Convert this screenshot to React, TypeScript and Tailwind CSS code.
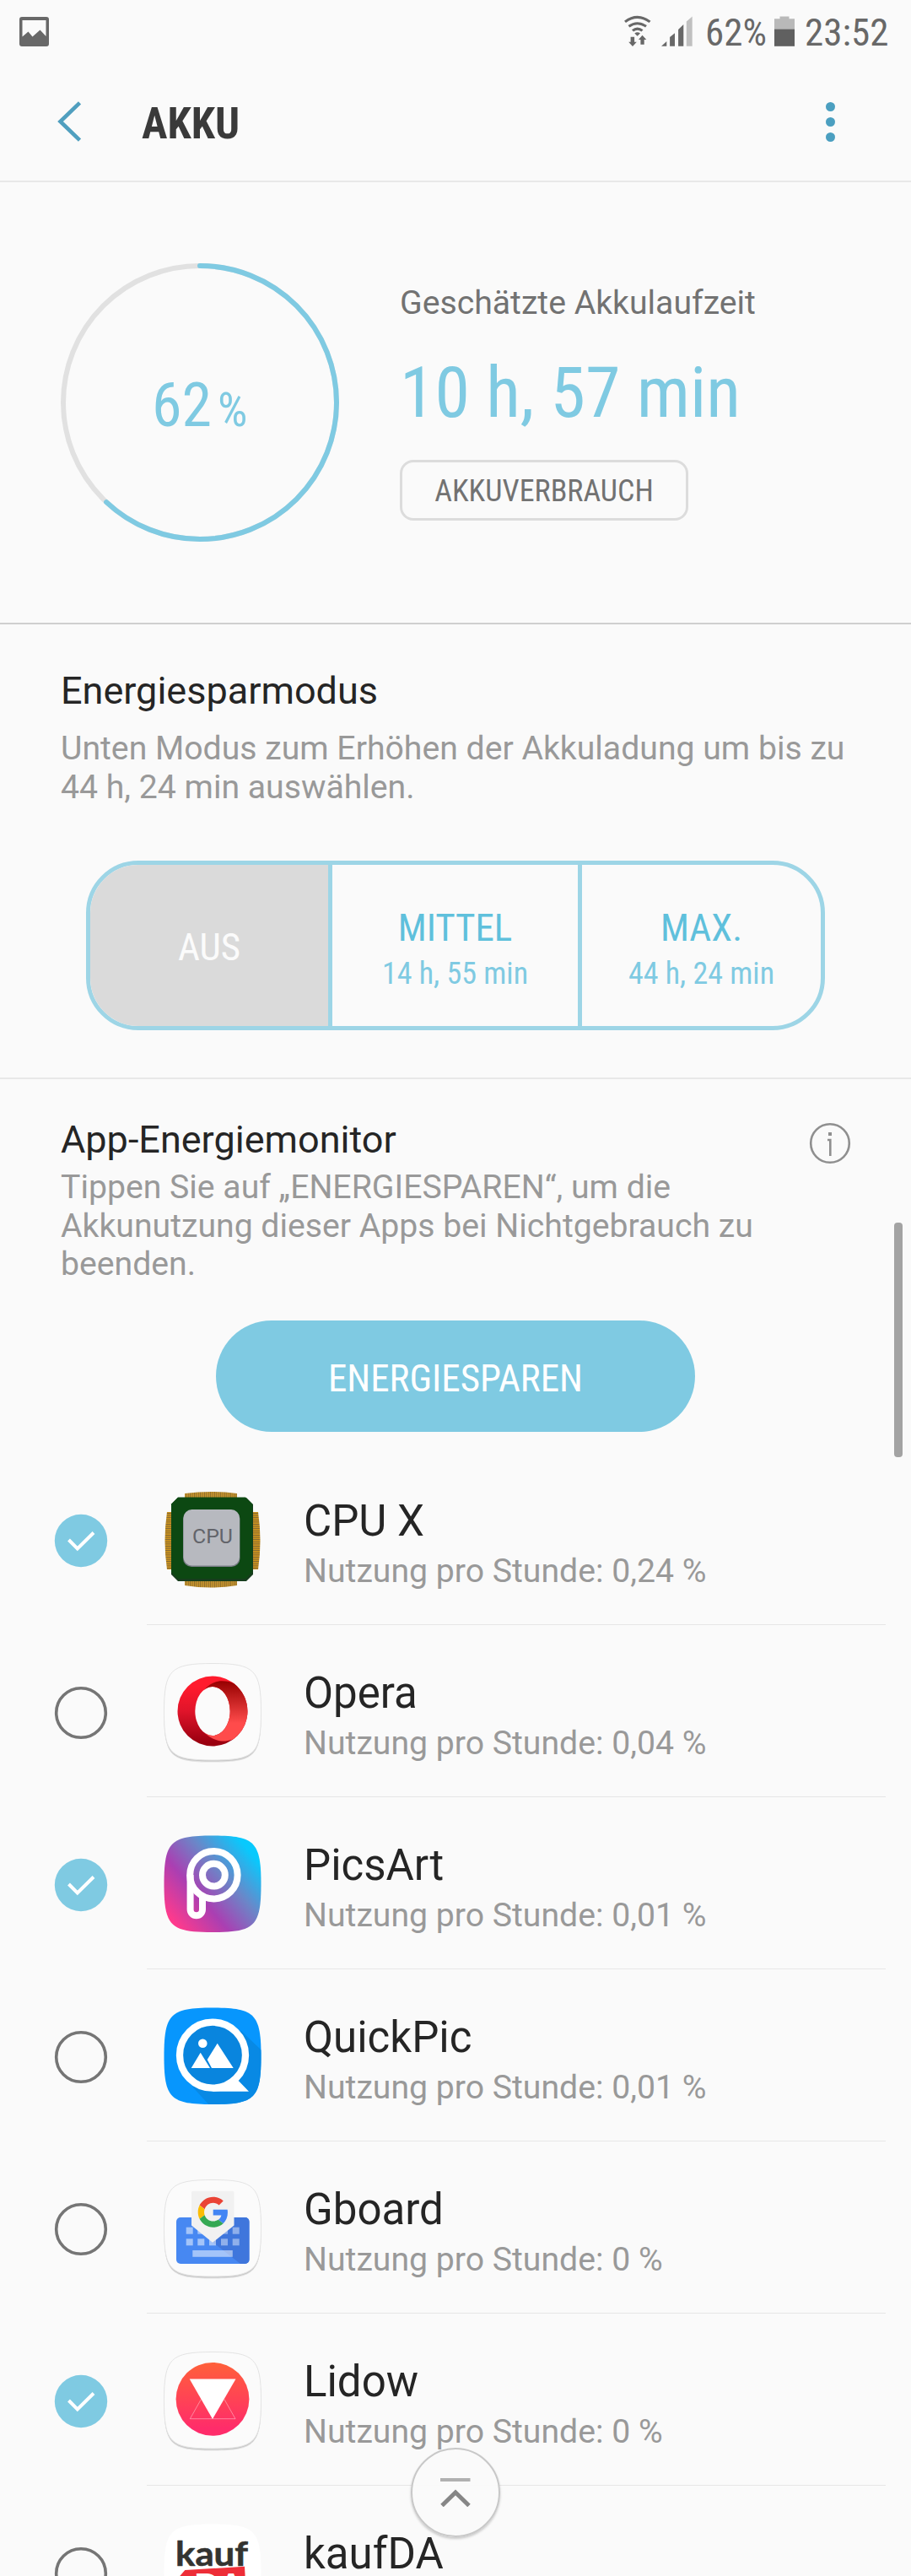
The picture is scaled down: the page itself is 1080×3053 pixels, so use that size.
import type { ReactNode } from "react";

const SQUIRCLE =
  "M58 .5C108 .5 115.5 8 115.5 58C115.5 108 108 115 58 115C8 115 .5 108 .5 58C.5 8 8 .5 58 .5Z";

function Cond({ children, className = "" }: { children: ReactNode; className?: string }) {
  return (
    <span className={"block whitespace-nowrap font-['Roboto_Condensed',Roboto,sans-serif] [font-stretch:75%] " + className}>
      {children}
    </span>
  );
}

function IconFrame({ children }: { children: ReactNode }) {
  return (
    <svg viewBox="0 0 116 120" className="block h-[120px] w-[116px] shrink-0">
      {children}
    </svg>
  );
}

function LightTile() {
  return (
    <>
      <path d={SQUIRCLE} fill="#e2e2e2" transform="translate(0 2.6)" />
      <path d={SQUIRCLE} fill="#c6c6c6" transform="translate(0 1.5)" />
      <path d={SQUIRCLE} fill="#fbfbfb" stroke="#e4e4e4" strokeWidth="1" />
    </>
  );
}

function CpuIcon() {
  return (
    <IconFrame>
      <defs>
        <pattern id="pinV" width="2.4" height="10" patternUnits="userSpaceOnUse">
          <rect width="2.4" height="10" fill="#c8962e" />
          <rect width=".9" height="10" fill="#8a6a2c" />
        </pattern>
        <pattern id="pinH" width="10" height="2.6" patternUnits="userSpaceOnUse">
          <rect width="10" height="2.6" fill="#d0951c" />
          <rect width="10" height="1" fill="#806534" />
        </pattern>
      </defs>
      <path d="M25 10V3Q56-1 87 3V10Z" fill="url(#pinV)" />
      <path d="M25 103V112Q56 117 87 112V103Z" fill="url(#pinV)" />
      <path d="M10 25H4Q-1 59 4 93H10Z" fill="url(#pinH)" />
      <path d="M104 25H112Q117 59 112 93H104Z" fill="url(#pinH)" />
      <path d="M17 8H98L106 16V99L98 107H17L9 99V16Z" fill="#163d1d" />
      <path d="M17 7.500H97L105 15.500V96L97 104H17L9 96V15.500Z" fill="#0c4812" />
      <rect x="23" y="23" width="67.5" height="67" rx="10" fill="#777c84" />
      <rect x="23.5" y="22" width="66.5" height="66.5" rx="10" fill="#b7b9bf" />
      <text x="34" y="62" fontSize="24" fill="#62646a" fontFamily="Roboto, sans-serif" textLength="48" lengthAdjust="spacingAndGlyphs">
        CPU
      </text>
    </IconFrame>
  );
}

function OperaIcon() {
  return (
    <IconFrame>
      <defs>
        <linearGradient id="opL" x1="0" y1="0" x2="0" y2="1">
          <stop offset=".15" stopColor="#ff1b2d" />
          <stop offset=".5" stopColor="#e0142a" />
          <stop offset=".95" stopColor="#9a0010" />
        </linearGradient>
        <linearGradient id="opR" x1="0" y1="0" x2="0" y2="1">
          <stop offset="0" stopColor="#960000" />
          <stop offset=".7" stopColor="#ff4b4b" />
        </linearGradient>
      </defs>
      <LightTile />
      <path
        fillRule="evenodd"
        fill="url(#opL)"
        d="M58 15.5A41.5 41.5 0 0 1 58 98.500A41.5 41.5 0 0 1 58 15.500ZM58 28A20.700 29 0 0 0 58 86A20.700 29 0 0 0 58 28Z"
      />
      <path
        fill="url(#opR)"
        d="M48 32C54 25 61 21.300 69 21.300C75 21.300 80 22.600 83.500 24.300A41.500 41.500 0 0 1 83.500 89.700C80 91.600 75 92.500 69 92.500C61 92 54 88 48 82C52 85.200 55 86 58 86A20.700 29 0 0 0 58 28C55 28 52 28.800 48 32Z"
      />
    </IconFrame>
  );
}

function PicsArtIcon() {
  return (
    <IconFrame>
      <defs>
        <linearGradient id="pa" x1=".08" y1=".88" x2=".9" y2=".18">
          <stop offset="0" stopColor="#ff3a8c" />
          <stop offset=".35" stopColor="#aa3fb2" />
          <stop offset=".66" stopColor="#6b86c8" />
          <stop offset="1" stopColor="#08c9fd" />
        </linearGradient>
      </defs>
      <path d={SQUIRCLE} fill="url(#pa)" />
      <g fill="none" stroke="#fff" strokeWidth="8">
        <circle cx="59.400" cy="47.200" r="28.200" />
        <circle cx="59.400" cy="47.200" r="13.400" />
        <path d="M31.600 47V88a7.200 7.200 0 0 0 14.400 0V71" />
      </g>
    </IconFrame>
  );
}

function QuickPicIcon() {
  return (
    <IconFrame>
      <defs>
        <clipPath id="qpc">
          <path d={SQUIRCLE} />
        </clipPath>
      </defs>
      <path d={SQUIRCLE} fill="#0796fd" />
      <path d="M92 28L118 53V118H56L34 94Z" fill="#0889e4" clipPath="url(#qpc)" />
      <path d="M80 90L88.700 87L101 99.700H58V92Z" fill="#fff" />
      <circle cx="58" cy="56.700" r="39" fill="#0985de" stroke="#fff" strokeWidth="8.300" />
      <circle cx="46.300" cy="42.700" r="5.300" fill="#fff" />
      <path d="M43.700 53.700L55 72H32.700ZM63.700 42.700L82.700 72H57L51.700 62Z" fill="#fff" />
    </IconFrame>
  );
}

const KEY_X = [26.7, 40.3, 54, 68, 81.7];

function GboardIcon() {
  return (
    <IconFrame>
      <LightTile />
      <rect x="15" y="45" width="86.500" height="55" rx="5" fill="#4788f2" />
      <path d="M83.300 45H96.500a5 5 0 0 1 5 5V95a5 5 0 0 1-5 5H91L58 74.300L83.300 54Z" fill="#3f76dc" />
      {KEY_X.map((x) => (
        <g key={x} fill="#fff" fillOpacity={x > 60 ? 0.42 : 0.5}>
          <rect x={x} y="56.700" width="8" height="8" />
          <rect x={x} y="70.300" width="8" height="8" />
        </g>
      ))}
      <rect x="34.300" y="84" width="47.500" height="7.800" fill="#fff" fillOpacity=".5" />
      <path d="M35 13.700H81.500a2 2 0 0 1 2 2V54.500L58 74.800L33 54.500V15.700a2 2 0 0 1 2-2Z" fill="#f1f1f1" />
      <g transform="translate(40.700 20.700) scale(.75)">
        <path fill="#EA4335" d="M24 9.500c3.540 0 6.710 1.220 9.210 3.600l6.850-6.850C35.900 2.380 30.470 0 24 0 14.620 0 6.510 5.380 2.560 13.220l7.980 6.190C12.430 13.720 17.740 9.500 24 9.500z" />
        <path fill="#4285F4" d="M46.980 24.550c0-1.570-.15-3.090-.38-4.550H24v9.020h12.940c-.58 2.960-2.260 5.480-4.780 7.180l7.730 6c4.510-4.180 7.090-10.360 7.090-17.650z" />
        <path fill="#FBBC05" d="M10.530 28.590c-.48-1.450-.76-2.990-.76-4.590s.27-3.140.76-4.590l-7.980-6.190C.92 16.460 0 20.120 0 24c0 3.880.92 7.540 2.560 10.780l7.970-6.190z" />
        <path fill="#34A853" d="M24 48c6.480 0 11.930-2.130 15.890-5.810l-7.730-6c-2.150 1.450-4.920 2.300-8.160 2.300-6.260 0-11.570-4.220-13.470-9.910l-7.980 6.190C6.510 42.620 14.620 48 24 48z" />
      </g>
    </IconFrame>
  );
}

function LidowIcon() {
  return (
    <IconFrame>
      <defs>
        <linearGradient id="li" x1="0" y1="0" x2="0" y2="1">
          <stop offset="0" stopColor="#ff603a" />
          <stop offset=".9" stopColor="#ff2c6a" />
        </linearGradient>
      </defs>
      <LightTile />
      <circle cx="58" cy="56.300" r="43.400" fill="url(#li)" />
      <path d="M44.300 56.700L31.300 79.700H85L72 56.700" fill="none" stroke="#fff" strokeOpacity=".5" strokeWidth=".8" />
      <path d="M30.700 32.500H85.500L58 80Z" fill="#fff" />
    </IconFrame>
  );
}

function KaufIcon() {
  return (
    <IconFrame>
      <path d={SQUIRCLE} fill="#fff" />
      <text x="14" y="49.500" fontSize="40" fontWeight="700" fill="#333330" stroke="#333330" strokeWidth=".6" strokeLinejoin="round" fontFamily="Lato, sans-serif" textLength="86" lengthAdjust="spacingAndGlyphs">
        kauf
      </text>
      <path d="M25.300 55L96 50.700L98 90H8V75Z" fill="#ee2e38" />
      <text x="36" y="87" fontSize="38" fontWeight="900" fill="#fff" fontFamily="Lato, sans-serif" textLength="58" lengthAdjust="spacingAndGlyphs">
        DA
      </text>
    </IconFrame>
  );
}

function Check({ on }: { on: boolean }) {
  return (
    <svg viewBox="0 0 64 64" className="block h-16 w-16 shrink-0">
      {on ? (
        <>
          <circle cx="32" cy="32" r="31.200" fill="#7fcae2" />
          <path d="M17.500 31L27.800 41.500L47 22.500" fill="none" stroke="#fff" strokeWidth="4" />
        </>
      ) : (
        <circle cx="32" cy="32" r="29.300" fill="none" stroke="#757575" strokeWidth="3.600" />
      )}
    </svg>
  );
}

const APPS = [
  { name: "CPU X", usage: "0,24 %", on: true, icon: <CpuIcon /> },
  { name: "Opera", usage: "0,04 %", on: false, icon: <OperaIcon /> },
  { name: "PicsArt", usage: "0,01 %", on: true, icon: <PicsArtIcon /> },
  { name: "QuickPic", usage: "0,01 %", on: false, icon: <QuickPicIcon /> },
  { name: "Gboard", usage: "0 %", on: false, icon: <GboardIcon /> },
  { name: "Lidow", usage: "0 %", on: true, icon: <LidowIcon /> },
  { name: "kaufDA", usage: "0 %", on: false, icon: <KaufIcon /> },
];

function AppRow({ app }: { app: (typeof APPS)[number] }) {
  return (
    <li className="flex h-[204px] pl-16">
      <div className="pt-[72px]">
        <Check on={app.on} />
      </div>
      <div className="ml-[46px] mr-[30px] flex grow border-b border-[#e6e6e6] pl-5">
        <div className="pt-[45px]">{app.icon}</div>
        <div className="ml-[50px] pt-[51px]">
          <div className="text-[51px] leading-[60px] text-[#252525]">{app.name}</div>
          <div className="mt-[4px] text-[39.200px] leading-[50px] text-[#999]">Nutzung pro Stunde: {app.usage}</div>
        </div>
      </div>
    </li>
  );
}

function StatusBar() {
  return (
    <div className="flex h-[74px] items-center pl-[23px] pr-[25px] text-[#686868]">
      <svg viewBox="0 0 35 35" className="h-[35px] w-[35px]">
        <path fillRule="evenodd" fill="currentColor" d="M3 0H32a3 3 0 0 1 3 3V32a3 3 0 0 1-3 3H3a3 3 0 0 1-3-3V3a3 3 0 0 1 3-3ZM3.500 4V23.500L10.500 17.500L15.500 23.500L24.500 15.500L31.500 23V4Z" />
      </svg>
      <svg viewBox="0 0 32 40" preserveAspectRatio="none" className="ml-auto h-[38px] w-8">
        <g fill="none" stroke="currentColor" strokeWidth="3.200">
          <path d="M1 8.300Q15.600-3.200 30.500 8.300" />
          <path d="M5.500 14Q15.600 6.500 26 14" />
          <path d="M10 19.300Q15.600 14.500 21.500 19.300" />
        </g>
        <path fill="currentColor" d="M12.300 22.500Q15.600 20 19 22.500L15.600 26ZM7.600 27h4.500v6.500h2.700L10 39L5.200 33.500h2.400ZM19.400 36.500V30.500H17L21.500 25L26.300 30.500H23.700V36.500Z" />
      </svg>
      <svg viewBox="0 0 37 38" preserveAspectRatio="none" className="ml-3 h-[36px] w-[37px]">
        <path fill="currentColor" d="M0 37.800H6.300V31.600ZM10.100 37.800V26.500L16 21.300V37.800ZM20.100 37.800V16.800L26.300 10.600V37.800Z" />
        <path fill="#c0c0c0" d="M29.800 37.800V6.800L36.700.6V37.800Z" />
      </svg>
      <Cond className="ml-[15px] mt-[3px] w-[74px] text-[45px] leading-none">62%</Cond>
      <svg viewBox="0 0 24 38" preserveAspectRatio="none" className="ml-[8px] h-[36px] w-6">
        <path fill="#b9b9b9" d="M0 17V3.500H6.500V.500H17.500V3.500H24V17Z" />
        <path fill="#606060" d="M0 16.500H24V37.800H0Z" />
      </svg>
      <Cond className="ml-3 mt-[3px] w-[101px] text-[45px] leading-none">23:52</Cond>
    </div>
  );
}

function Header() {
  return (
    <header className="flex h-[142px] items-center border-b-2 border-[#e8e8e8] pl-[67px] pr-[90px]">
      <svg viewBox="0 0 30 48" className="h-[48px] w-[30px]">
        <path d="M27.500 1.800L4.500 24L27.500 46.200" fill="none" stroke="#509fbf" strokeWidth="4.600" />
      </svg>
      <Cond className="ml-[71px] mt-1 text-[51px] font-bold leading-none text-[#3a3a3a]">AKKU</Cond>
      <div className="ml-auto flex flex-col gap-[7px]">
        <i className="block h-[11px] w-[11px] rounded-full bg-[#4b9fc0]" />
        <i className="block h-[11px] w-[11px] rounded-full bg-[#4b9fc0]" />
        <i className="block h-[11px] w-[11px] rounded-full bg-[#4b9fc0]" />
      </div>
    </header>
  );
}

function Summary() {
  return (
    <section className="flex h-[524px] border-b-2 border-[#cfcfcf] pl-[72px] pt-[96px]">
      <div className="relative h-[330px] w-[330px] shrink-0">
        <svg viewBox="0 0 330 330" className="h-full w-full" fill="none" strokeWidth="6">
          <circle cx="165" cy="165" r="162" stroke="#e1e1e1" />
          <circle cx="165" cy="165" r="162" stroke="#7fcae2" strokeLinecap="round" pathLength="100" strokeDasharray="62 100" transform="rotate(-90 165 165)" />
        </svg>
        <div className="absolute inset-0 flex pl-[108px] pt-[134px] text-[#7fcae2]">
          <Cond className="text-[72px] leading-[70px]">62</Cond>
          <Cond className="ml-[7px] mt-[5px] text-[56px] leading-[70px]">%</Cond>
        </div>
      </div>
      <div className="ml-[72px] pt-[20px]">
        <div className="text-[39.200px] leading-[54px] text-[#727272]">Geschätzte Akkulaufzeit</div>
        <Cond className="mt-[30px] text-[84px] leading-[100px] text-[#7fcae2]">10 h, 57 min</Cond>
        <div className="mt-[29px] flex h-[72px] w-[342px] items-center justify-center rounded-[16px] border-[3px] border-[#dcdcdc] text-[#727272]">
          <Cond className="mt-[2px] text-[36px] leading-none">AKKUVERBRAUCH</Cond>
        </div>
      </div>
    </section>
  );
}

function PowerSaving() {
  return (
    <section className="flex h-[539px] flex-col border-b-2 border-[#e8e8e8] px-[72px] pt-[49px]">
      <h2 className="text-[45px] leading-[60px] text-[#252525]">Energiesparmodus</h2>
      <p className="mt-[16px] whitespace-nowrap text-[39.200px] leading-[45.700px] text-[#999]">
        Unten Modus zum Erhöhen der Akkuladung um bis zu
        <br />
        44 h, 24 min auswählen.
      </p>
      <div className="ml-[30px] mt-[64px] flex h-[201px] w-[876px] shrink-0 overflow-hidden rounded-[62px] border-[5px] border-[#9dd5e6] text-[#5fc0dc]">
        <div className="flex w-[282px] items-center justify-center bg-[#dadada] text-white/90">
          <Cond className="mt-[3px] text-[45px] leading-none">AUS</Cond>
        </div>
        <div className="flex w-[301px] flex-col items-center border-x-[5px] border-[#9dd5e6] pt-[48px]">
          <Cond className="text-[45px] leading-[54px]">MITTEL</Cond>
          <Cond className="text-[36px] leading-[54px] text-[#7fcae2]">14 h, 55 min</Cond>
        </div>
        <div className="flex grow flex-col items-center pt-[48px]">
          <Cond className="text-[45px] leading-[54px]">MAX.</Cond>
          <Cond className="text-[36px] leading-[54px] text-[#7fcae2]">44 h, 24 min</Cond>
        </div>
      </div>
    </section>
  );
}

function Monitor() {
  return (
    <section className="flex h-[443px] flex-col px-[72px] pt-[42px]">
      <div className="flex h-[60px] items-start justify-between">
        <h2 className="text-[45px] leading-[60px] text-[#252525]">App-Energiemonitor</h2>
        <svg viewBox="0 0 50 50" className="mt-[9px] mr-[-1px] h-[50px] w-[50px]" fill="none" stroke="#8f8f8f" strokeWidth="2.600">
          <circle cx="25" cy="25" r="22.800" />
          <path d="M22 21H25.300V40" />
          <path d="M25 12V16" strokeWidth="4" />
        </svg>
      </div>
      <p className="mt-[4px] whitespace-nowrap text-[39.200px] leading-[45.700px] text-[#999]">
        Tippen Sie auf „ENERGIESPAREN“, um die
        <br />
        Akkunutzung dieser Apps bei Nichtgebrauch zu
        <br />
        beenden.
      </p>
      <div className="mt-[43px] flex h-[132px] w-[568px] shrink-0 items-center justify-center self-center rounded-full bg-[#7fcae2] text-white">
        <Cond className="mt-1 text-[45px] leading-none">ENERGIESPAREN</Cond>
      </div>
    </section>
  );
}

export default function App() {
  return (
    <div className="relative h-[3053px] w-[1080px] overflow-hidden bg-[#fafafa] font-[Roboto,sans-serif]">
      <StatusBar />
      <Header />
      <Summary />
      <PowerSaving />
      <Monitor />
      <ul>
        {APPS.map((app) => (
          <AppRow key={app.name} app={app} />
        ))}
      </ul>
      <div className="absolute left-[1060px] top-[1449px] h-[278px] w-[10px] rounded-[4px] bg-[#a3a3a3]" />
      <div className="absolute left-[487px] top-[2901px] flex h-[106px] w-[106px] items-center justify-center rounded-full border-2 border-[#c8c8c8] bg-[#fafafa]/95 shadow-[0_2px_3px_rgba(0,0,0,0.2)]">
        <svg viewBox="0 0 36 34" className="h-[34px] w-9" fill="none">
          <path d="M0 2H35.500" stroke="#b0b0b0" strokeWidth="4" />
          <path d="M2 32.500L18 17L34 32.500" stroke="#868686" strokeWidth="5" />
        </svg>
      </div>
    </div>
  );
}
